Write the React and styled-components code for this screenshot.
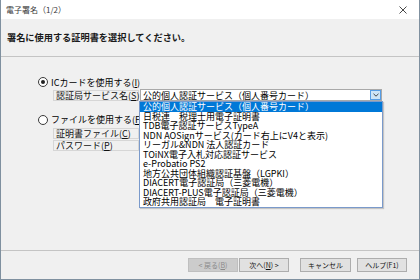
import React from 'react';
import styled, { createGlobalStyle } from 'styled-components';

const Global = createGlobalStyle`
  html, body { margin: 0; padding: 0; background: #f0f0f0; }
  body { font-family: "Noto Sans CJK JP", "Noto Sans", sans-serif; }
  * { box-sizing: border-box; }
`;

const Window = styled.div`
  position: relative;
  width: 420px;
  height: 280px;
  background: #f0f0f0;
  border: 1px solid #7f909f;
  border-top: none;
  display: flex;
  flex-direction: column;
  overflow: hidden;
  font-family: "Noto Sans CJK JP", sans-serif;
  color: #000;
`;

const TitleBar = styled.div`
  height: 19px;
  flex: none;
  background: #fff;
  display: flex;
  align-items: center;
  justify-content: space-between;
  padding: 0 12px 0 5px;
  font-size: 8px;
  color: #3a3a3a;
`;

const Header = styled.div`
  height: 38px;
  flex: none;
  display: flex;
  align-items: center;
  padding: 0 0 1px 6px;
  border-bottom: 1px solid #c4c4c4;
  font-size: 9.2px;
  font-weight: 700;
  color: #1a1a1a;
`;

const Content = styled.div`
  flex: 1;
  padding: 19px 0 0 37px;
  display: flex;
  flex-direction: column;
`;

const RadioRow = styled.div`
  height: 12px;
  display: flex;
  align-items: center;
  gap: 3px;
  font-size: 9px;
  white-space: nowrap;
  margin-top: ${p => p.$mt || 0}px;
`;

const RadioCircle = styled.span`
  width: 10px;
  height: 10px;
  border-radius: 50%;
  border: 1px solid #3a3a3a;
  background: #fff;
  display: inline-flex;
  align-items: center;
  justify-content: center;
  flex: none;
  &::after {
    content: '';
    width: 4px;
    height: 4px;
    border-radius: 50%;
    background: ${p => (p.$checked ? '#222' : 'transparent')};
  }
`;

const FieldRow = styled.div`
  height: ${p => p.$h || 11}px;
  display: flex;
  align-items: center;
  margin: ${p => p.$mt || 0}px 0 0 15px;
`;

const FieldLabel = styled.div`
  width: 86px;
  height: 11px;
  border: 1px solid #d6d6d6;
  display: flex;
  align-items: center;
  padding-left: 2px;
  font-size: 9px;
  white-space: nowrap;
  color: #111;
`;

const Combo = styled.div`
  width: 242px;
  height: 12px;
  margin-left: 1px;
  background: #fff;
  border: 1px solid #a9a9a9;
  display: flex;
  align-items: center;
  justify-content: space-between;
  padding-left: 2px;
  font-size: 9px;
  white-space: nowrap;
`;

const ComboButton = styled.span`
  width: 11px;
  height: 10px;
  background: #cce4f7;
  border: 1px solid #569de5;
  display: flex;
  align-items: center;
  justify-content: center;
  flex: none;
`;

const DropList = styled.div`
  position: absolute;
  left: 138px;
  top: 101px;
  width: 244px;
  background: #fff;
  border: 1px solid #7a9acb;
  box-shadow: 1px 1px 1px rgba(0, 0, 0, 0.18);
  display: flex;
  flex-direction: column;
`;

const DropItem = styled.div`
  height: 9.5px;
  line-height: 9.5px;
  font-size: 9px;
  padding-left: 3px;
  white-space: nowrap;
  background: ${p => (p.$selected ? '#0078d7' : 'transparent')};
  color: ${p => (p.$selected ? '#fff' : '#000')};
`;

const Footer = styled.div`
  height: 29px;
  flex: none;
  border-top: 1px solid #c4c4c4;
  display: flex;
  justify-content: flex-end;
  align-items: flex-start;
  padding: 7px 12px 0 0;
`;

const Button = styled.div`
  width: ${p => p.$w || 50}px;
  height: 14px;
  margin-left: ${p => p.$gap || 0}px;
  display: flex;
  align-items: center;
  justify-content: center;
  font-size: 7px;
  white-space: nowrap;
  background: ${p => (p.$disabled ? '#cccccc' : '#e1e1e1')};
  border: 1px solid ${p => (p.$disabled ? '#bfbfbf' : '#adadad')};
  color: ${p => (p.$disabled ? '#8a8a8a' : '#111')};
`;

const U = styled.span`
  text-decoration: underline;
`;

const items = [
  '公的個人認証サービス（個人番号カード）',
  '日税連　税理士用電子証明書',
  'TDB電子認証サービスTypeA',
  'NDN AOSignサービス(カード右上にV4と表示)',
  'リーガル&NDN 法人認証カード',
  'TOiNX電子入札対応認証サービス',
  'e-Probatio PS2',
  '地方公共団体組織認証基盤（LGPKI）',
  'DIACERT電子認証局（三菱電機）',
  'DIACERT-PLUS電子認証局（三菱電機）',
  '政府共用認証局　電子証明書',
];

export default function App() {
  return (
    <>
      <Global />
      <Window>
        <TitleBar>
          <span>電子署名（1/2）</span>
          <svg width="8" height="8" viewBox="0 0 8 8">
            <path d="M0.5 0.5 L7.5 7.5 M7.5 0.5 L0.5 7.5" stroke="#333" strokeWidth="0.9" fill="none" />
          </svg>
        </TitleBar>
        <Header>署名に使用する証明書を選択してください。</Header>
        <Content>
          <RadioRow>
            <RadioCircle $checked />
            <span>ICカードを使用する(<U>I</U>)</span>
          </RadioRow>
          <FieldRow $h={12} $mt={1}>
            <FieldLabel>認証局サービス名(<U>S</U>)</FieldLabel>
            <Combo>
              <span>公的個人認証サービス（個人番号カード）</span>
              <ComboButton>
                <svg width="6" height="4" viewBox="0 0 6 4">
                  <path d="M0.5 0.8 L3 3.2 L5.5 0.8" stroke="#333" strokeWidth="0.9" fill="none" />
                </svg>
              </ComboButton>
            </Combo>
          </FieldRow>
          <RadioRow $mt={12.5}>
            <RadioCircle />
            <span>ファイルを使用する(<U>F</U>)</span>
          </RadioRow>
          <FieldRow $mt={2.5}>
            <FieldLabel>証明書ファイル(<U>C</U>)</FieldLabel>
          </FieldRow>
          <FieldRow $mt={1}>
            <FieldLabel>パスワード(<U>P</U>)</FieldLabel>
          </FieldRow>
        </Content>
        <Footer>
          <Button $disabled>&lt; 戻る(<U>B</U>)</Button>
          <Button $gap={1}>次へ(<U>N</U>) &gt;</Button>
          <Button $gap={11} $w={51}>キャンセル</Button>
          <Button $gap={6}>ヘルプ(F1)</Button>
        </Footer>
        <DropList>
          {items.map((t, i) => (
            <DropItem key={t} $selected={i === 0}>{t}</DropItem>
          ))}
        </DropList>
      </Window>
    </>
  );
}
